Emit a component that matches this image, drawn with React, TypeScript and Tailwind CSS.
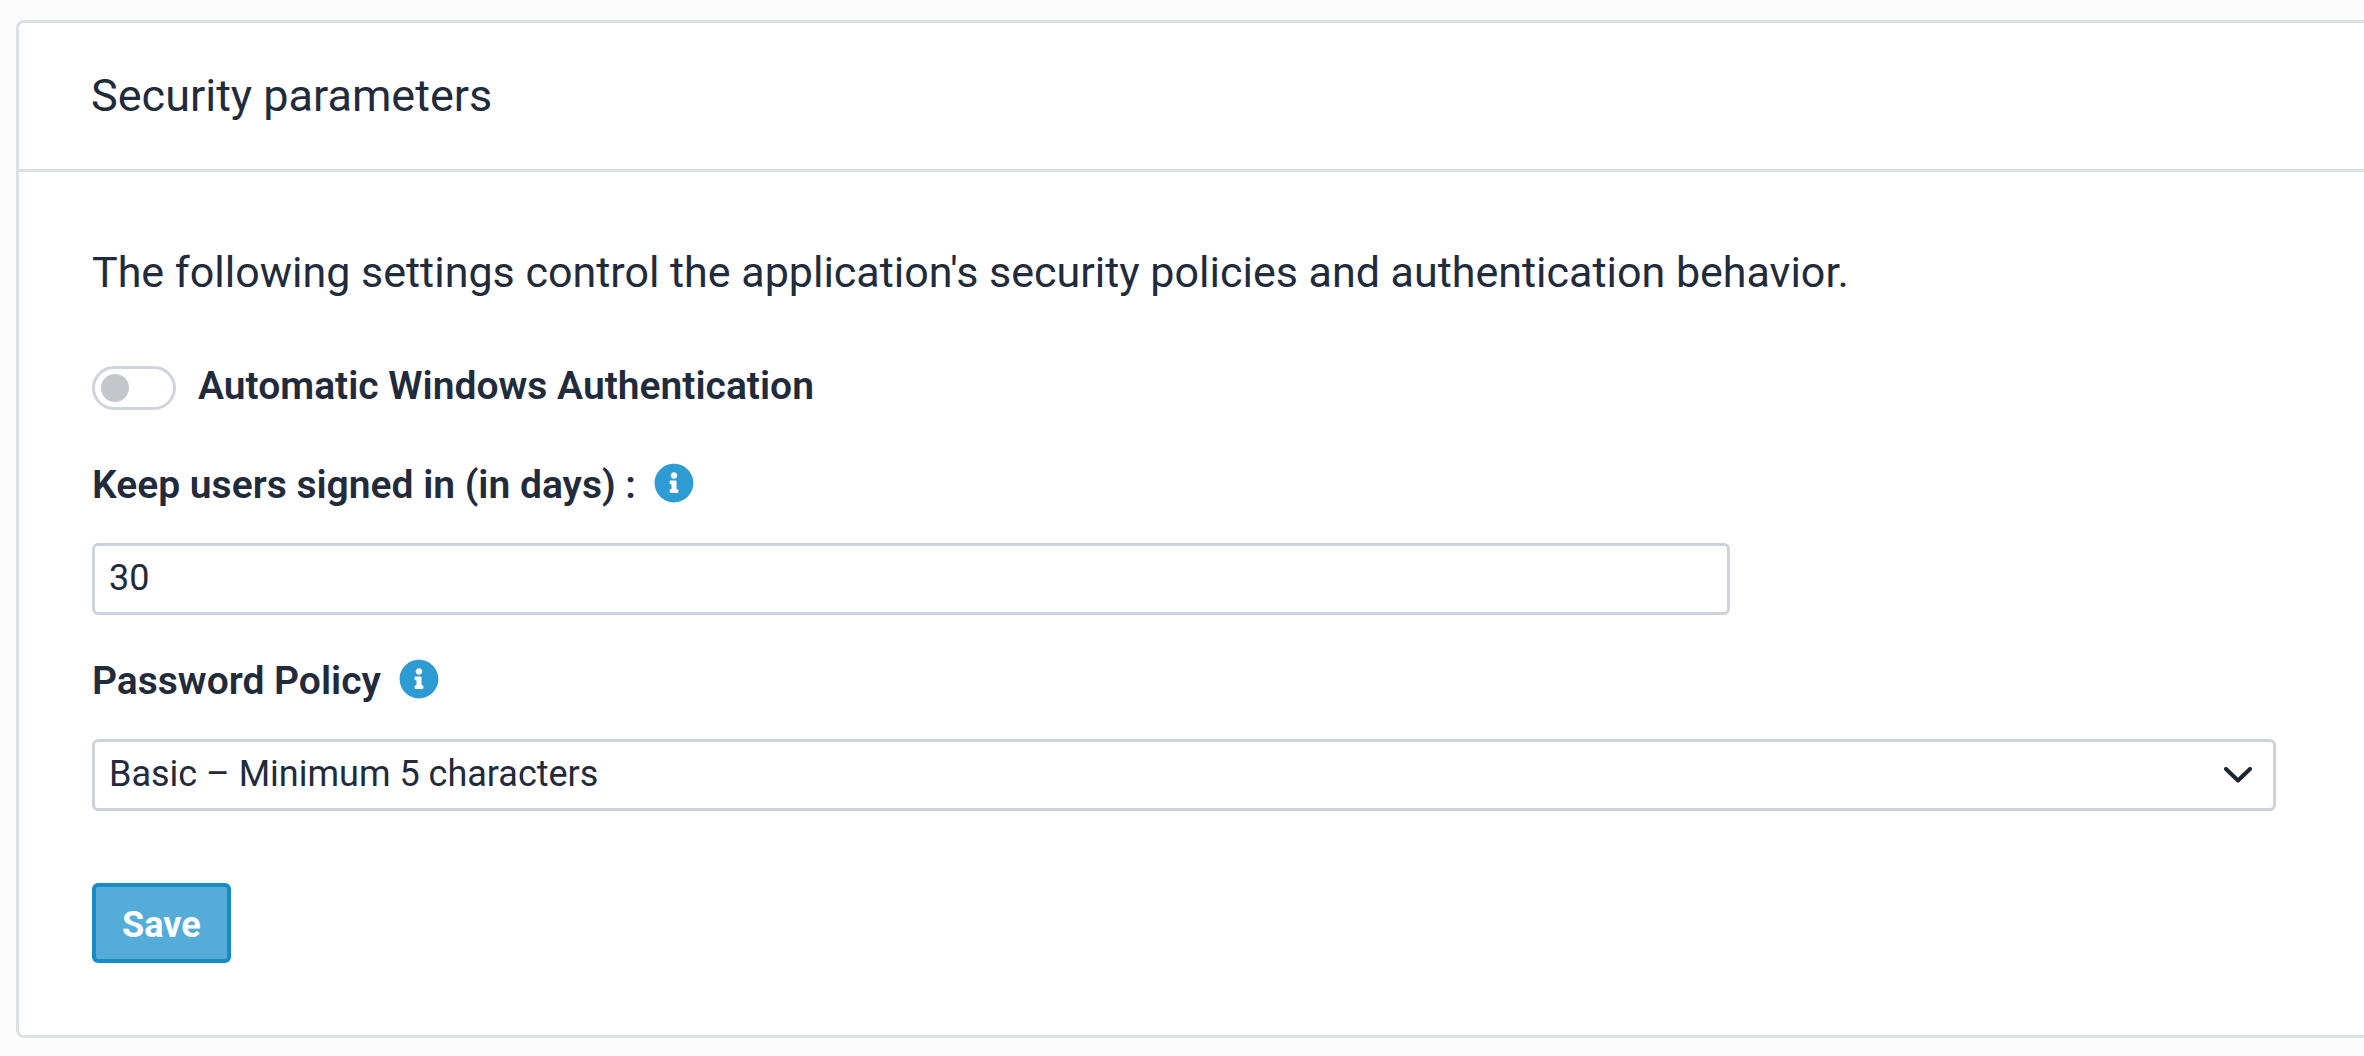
import { useState } from 'react';
import type { FormEvent, ReactNode } from 'react';
import { FaInfoCircle } from 'react-icons/fa';

const POLICIES = [
  { value: 'basic', label: 'Basic – Minimum 5 characters' },
];

function FieldLabel({ htmlFor, children }: { htmlFor: string; children: ReactNode }) {
  return (
    <div className="flex items-center gap-[18px] h-12">
      <label htmlFor={htmlFor} className="pt-1 text-[39px] leading-[48px] font-semibold">
        {children}
      </label>
      <button type="button" aria-label="More information" className="text-[#2f9bd3]">
        <FaInfoCircle size={40} />
      </button>
    </div>
  );
}

export default function App() {
  const [autoAuth, setAutoAuth] = useState(false);
  const [days, setDays] = useState('30');
  const [policy, setPolicy] = useState('basic');

  const handleSubmit = (e: FormEvent) => {
    e.preventDefault();
  };

  return (
    <div className="min-h-screen bg-[#fcfcfc] pt-5 pb-4 pl-4 font-[Roboto,sans-serif] text-[#212b3b]">
      <section className="bg-white border-[3px] border-r-0 border-[#dce1e7] rounded-l-lg">
        {/* Header */}
        <header className="border-b-[3px] border-[#dce1e7] px-[72px] py-11">
          <h1 className="text-[45px] leading-[58px]">Security parameters</h1>
        </header>

        {/* Body */}
        <form onSubmit={handleSubmit} className="pl-[73px] pr-[88px] pt-[70px] pb-[72px]">
          <p className="text-[43px] leading-[60px] mb-[62px]">
            The following settings control the application's security policies and authentication behavior.
          </p>

          <div className="flex items-center gap-[22px] h-12 mb-[47px]">
            <input
              id="auto-auth"
              type="checkbox"
              role="switch"
              checked={autoAuth}
              onChange={(e) => setAutoAuth(e.target.checked)}
              className="appearance-none flex items-center w-21 h-11 px-1.5 rounded-full border-[3px] border-[#cfd4dc] bg-white before:block before:size-7 before:rounded-full before:bg-[#c3c7cc] checked:justify-end checked:before:bg-[#2f9bd3]"
            />
            <label htmlFor="auto-auth" className="pb-1 text-[39px] leading-[48px] font-semibold">
              Automatic Windows Authentication
            </label>
          </div>

          <FieldLabel htmlFor="days">Keep users signed in (in days) :</FieldLabel>
          <input
            id="days"
            type="text"
            value={days}
            onChange={(e) => setDays(e.target.value)}
            className="block w-3/4 h-18 mt-9 mb-10 px-3.5 pb-0.5 text-[36px] bg-white border-[3px] border-[#cdd2db] rounded-md"
          />

          <FieldLabel htmlFor="policy">Password Policy</FieldLabel>
          <div className="grid items-center mt-9 mb-18">
            <select
              id="policy"
              value={policy}
              onChange={(e) => setPolicy(e.target.value)}
              className="appearance-none col-start-1 row-start-1 w-full h-18 pl-3.5 pr-16 pb-0.5 text-[36px] bg-white border-[3px] border-[#cdd2db] rounded-md"
            >
              {POLICIES.map((p) => (
                <option key={p.value} value={p.value}>{p.label}</option>
              ))}
            </select>
            <svg
              viewBox="0 0 28 16"
              className="col-start-1 row-start-1 justify-self-end mr-6 w-7 h-4 pointer-events-none"
              fill="none"
              stroke="#1d2530"
              strokeWidth="4"
              strokeLinecap="round"
              strokeLinejoin="round"
            >
              <path d="M2 2l12 11.500L26 2" />
            </svg>
          </div>

          <button
            type="submit"
            className="block h-20 px-[26px] pt-1 text-[36px] font-bold text-white bg-[#55acd9] border-[4px] border-[#168bc6] rounded-md"
          >
            Save
          </button>
        </form>
      </section>
    </div>
  );
}
